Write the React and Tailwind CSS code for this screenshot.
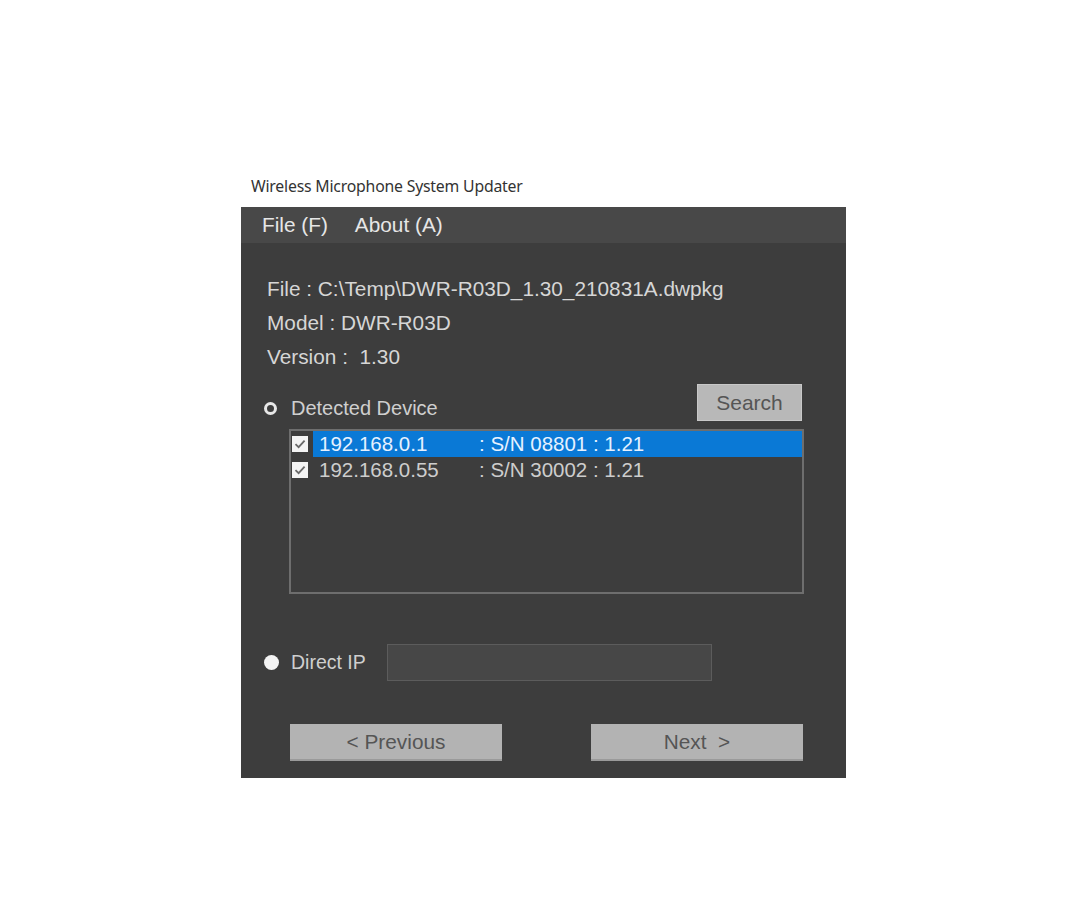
import { useState } from "react";

const DEVICES = [
  { ip: "192.168.0.1", sn: ": S/N 08801 : 1.21" },
  { ip: "192.168.0.55", sn: ": S/N 30002 : 1.21" },
];

function Check() {
  return (
    <span className="w-[16px] h-[16px] bg-[#f4f4f4] flex items-center justify-center shrink-0">
      <svg width="12" height="12" viewBox="0 0 12 12">
        <path d="M1.5 6.2 L4.6 9.2 L10.6 2.6" fill="none" stroke="#6a6a6a" strokeWidth="1.8" />
      </svg>
    </span>
  );
}

export default function App() {
  const [selected] = useState(0);

  return (
    <div className="min-h-screen w-[1092px] h-[924px] bg-white flex flex-col pt-[176px] pl-[241px] font-['Liberation_Sans',Arial,sans-serif]">
      <div className="text-[15.8px] text-[#333] pl-[10px] h-[31px] font-['Noto_Sans',sans-serif] leading-[20px] tracking-[-0.2px]">
        Wireless Microphone System Updater
      </div>
      <div className="w-[605px] h-[571px] bg-[#3d3d3d] flex flex-col">
        <div className="h-[36px] bg-[#484848] flex items-center gap-[27px] pl-[21px] text-[20.8px] text-[#e6e6e6]">
          <span>File (F)</span>
          <span>About (A)</span>
        </div>

        <div className="flex flex-col pl-[26px] pt-[34px] gap-[10px] text-[20.8px] text-[#d6d6d6] leading-[24px]">
          <div>File : C:\Temp\DWR-R03D_1.30_210831A.dwpkg</div>
          <div>Model : DWR-R03D</div>
          <div>Version :&nbsp; 1.30</div>
        </div>

        <div className="flex items-start justify-between pl-[23px] pr-[44px] mt-[15px]">
          <div className="flex items-center gap-[14px] mt-[12px] leading-[24px]">
            <span className="w-[13px] h-[13px] rounded-full border-[3px] border-[#e8e8e8] bg-[#3d3d3d]" />
            <span className="text-[20px] text-[#cfcfcf]">Detected Device</span>
          </div>
          <button className="w-[105px] h-[37px] bg-[#b8b8b8] border border-[#c8c8c8] text-[#555] text-[21px]">
            Search
          </button>
        </div>

        <div className="ml-[48px] mr-[42px] mt-[8px] h-[165px] border-[2px] border-[#6e6e6e] flex flex-col">
          {DEVICES.map((d, i) => (
            <div key={d.ip} className="flex items-center h-[26px]">
              <div className="w-[22px] flex items-center pl-[1px]">
                <Check />
              </div>
              <div
                className={`flex-1 flex items-center h-full pl-[6px] text-[20.5px] ${
                  i === selected ? "bg-[#0a79d6] text-[#e6f1ff]" : "text-[#cdcdcd]"
                }`}
              >
                <span className="w-[160px]">{d.ip}</span>
                <span>{d.sn}</span>
              </div>
            </div>
          ))}
        </div>

        <div className="flex items-center pl-[23px] mt-[50px]">
          <span className="w-[15px] h-[15px] rounded-full bg-[#f4f4f4]" />
          <span className="ml-[12px] text-[19.5px] text-[#cfcfcf]">Direct IP</span>
          <input className="ml-[21px] w-[325px] h-[37px] bg-[#474747] border border-[#5c5c5c] outline-none" />
        </div>

        <div className="flex justify-between pl-[49px] pr-[43px] mt-[43px]">
          <button className="w-[212px] h-[37px] bg-[#b3b3b3] border-b-[2px] border-[#9a9a9a] text-[#555] text-[20.8px]">
            &lt; Previous
          </button>
          <button className="w-[212px] h-[37px] bg-[#b3b3b3] border-b-[2px] border-[#9a9a9a] text-[#555] text-[20.8px]">
            Next&nbsp; &gt;
          </button>
        </div>
      </div>
    </div>
  );
}
